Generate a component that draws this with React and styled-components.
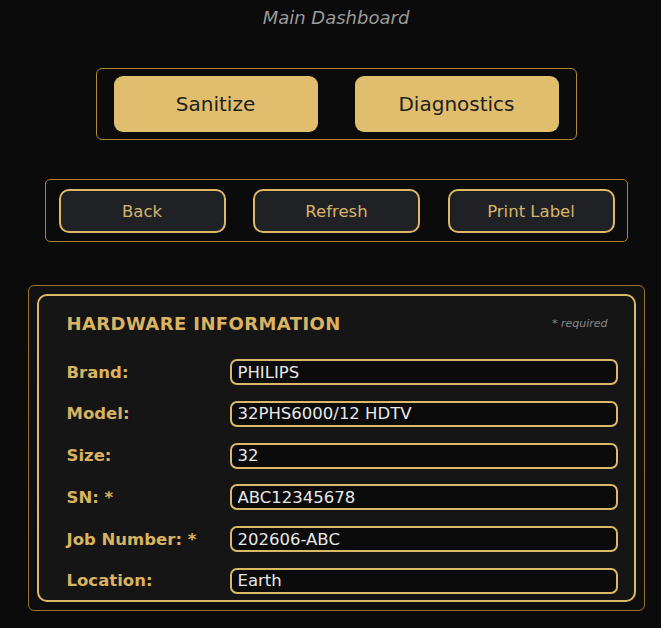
import React from "react";
import styled, { createGlobalStyle } from "styled-components";

const GlobalStyle = createGlobalStyle`
  html, body {
    margin: 0;
    padding: 0;
    background: #0b0b0b;
  }
  body {
    font-family: "DejaVu Sans", "Liberation Sans", sans-serif;
  }
`;

const gold = "#dcb966";

const fields = [
  { label: "Brand:", value: "PHILIPS" },
  { label: "Model:", value: "32PHS6000/12 HDTV" },
  { label: "Size:", value: "32" },
  { label: "SN: *", value: "ABC12345678" },
  { label: "Job Number: *", value: "202606-ABC" },
  { label: "Location:", value: "Earth" },
];

const App = () => {
  return (
    <Page>
      <GlobalStyle />
      <Title>Main Dashboard</Title>

      <PrimaryGroup>
        <PrimaryButton>Sanitize</PrimaryButton>
        <PrimaryButton>Diagnostics</PrimaryButton>
      </PrimaryGroup>

      <ActionGroup>
        <ActionButton>Back</ActionButton>
        <ActionButton>Refresh</ActionButton>
        <ActionButton>Print Label</ActionButton>
      </ActionGroup>

      <Panel>
        <Card>
          <CardHeader>
            <Heading>HARDWARE INFORMATION</Heading>
            <Required>* required</Required>
          </CardHeader>
          <Form>
            {fields.map((f) => (
              <React.Fragment key={f.label}>
                <Label>{f.label}</Label>
                <Field type="text" defaultValue={f.value} />
              </React.Fragment>
            ))}
          </Form>
        </Card>
      </Panel>
    </Page>
  );
};

const Page = styled.div`
  display: flex;
  flex-direction: column;
  align-items: center;
  padding: 7px 0 0 11px;
  min-height: 628px;
  box-sizing: border-box;
`;

const Title = styled.h1`
  margin: 0;
  font-size: 18px;
  font-weight: normal;
  font-style: italic;
  line-height: 22px;
  color: #9a9a9a;
`;

const PrimaryGroup = styled.div`
  margin-top: 39px;
  width: 481px;
  box-sizing: border-box;
  display: flex;
  justify-content: space-between;
  padding: 7px 17px;
  border: 1.5px solid #b08a33;
  border-radius: 6px;
`;

const PrimaryButton = styled.button`
  width: 204px;
  height: 56px;
  border: none;
  border-radius: 9px;
  background: #e0be6e;
  color: #1e1e1e;
  font-family: "DejaVu Sans", sans-serif;
  font-size: 20px;
  cursor: pointer;
`;

const ActionGroup = styled.div`
  margin-top: 39px;
  width: 583px;
  box-sizing: border-box;
  display: flex;
  justify-content: space-between;
  padding: 9px 12px 8px 13px;
  border: 1.5px solid #a8842f;
  border-radius: 5px;
`;

const ActionButton = styled.button`
  width: 167px;
  height: 44px;
  box-sizing: border-box;
  border: 2px solid ${gold};
  border-radius: 10px;
  background: #202124;
  color: #d6b46c;
  font-family: "DejaVu Sans", sans-serif;
  font-size: 16.5px;
  cursor: pointer;
`;

const Panel = styled.section`
  margin-top: 43px;
  width: 617px;
  box-sizing: border-box;
  padding: 8px;
  border: 1.5px solid #94732e;
  border-radius: 6px;
  background: linear-gradient(180deg, #121212, #0e0e0e);
`;

const Card = styled.div`
  border: 2px solid ${gold};
  border-radius: 10px;
  background: #151515;
  padding: 16px 16px 6px 28px;
`;

const CardHeader = styled.div`
  display: flex;
  align-items: center;
  justify-content: space-between;
  padding-right: 10px;
  height: 22px;
`;

const Heading = styled.h2`
  margin: 0;
  font-size: 18px;
  letter-spacing: 0.4px;
  font-weight: bold;
  color: #dab462;
`;

const Required = styled.span`
  font-size: 11px;
  font-style: italic;
  color: #8a8a8a;
`;

const Form = styled.div`
  margin-top: 25px;
  display: grid;
  grid-template-columns: 163px 1fr;
  row-gap: 15.8px;
  align-items: center;
`;

const Label = styled.label`
  font-size: 16.5px;
  font-weight: bold;
  color: #d9b35f;
`;

const Field = styled.input`
  height: 26px;
  box-sizing: border-box;
  padding: 0 6px;
  border: 2px solid ${gold};
  border-radius: 7px;
  background: #0b0b0b;
  color: #e8e8e8;
  font-family: "DejaVu Sans", sans-serif;
  font-size: 16.5px;
  outline: none;
`;

export default App;
